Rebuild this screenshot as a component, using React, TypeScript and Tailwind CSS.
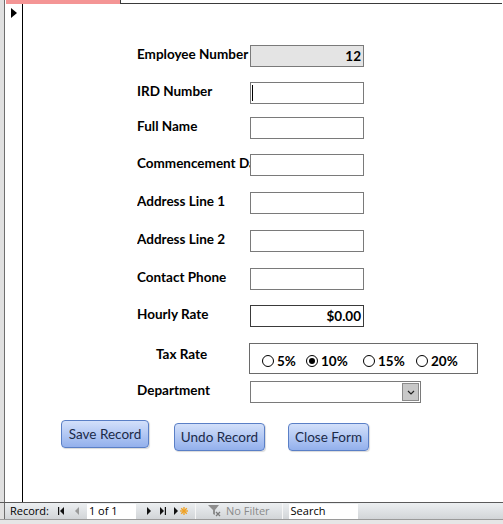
import React from "react";

const labelCls =
  "w-[113px] shrink-0 overflow-hidden whitespace-nowrap text-[13.5px] font-bold text-black leading-[16px] mb-[4px]";
const boxCls =
  "w-[114px] h-[22px] shrink-0 border border-[#7a7a7a] bg-white";

function Row({
  label,
  mt,
  children,
  gray,
}: {
  label: string;
  mt: string;
  children?: React.ReactNode;
  gray?: boolean;
}) {
  return (
    <div className={`flex items-center h-[22px] ${mt}`}>
      <div className={`${labelCls} ${gray ? "text-[#595959]" : ""}`}>{label}</div>
      {children ?? <div className={boxCls} />}
    </div>
  );
}

function Radio({ checked, label, w }: { checked?: boolean; label: string; w: string }) {
  return (
    <div className={`flex items-center ${w}`}>
      <div className="w-[12px] h-[12px] rounded-full border border-black bg-white flex items-center justify-center">
        {checked && <div className="w-[6px] h-[6px] rounded-full bg-black" />}
      </div>
      <span className="ml-[3px] text-[13.5px] font-bold leading-[16px]">{label}</span>
    </div>
  );
}

function Btn({ children, w, mt }: { children: React.ReactNode; w: string; mt: string }) {
  return (
    <div
      className={`${w} ${mt} h-[28px] rounded-[4px] border border-[#5a7fc6] bg-gradient-to-b from-[#d3e0fa] to-[#93b0ec] shadow-[1px_1px_1px_rgba(0,0,0,0.15)] flex items-center justify-center text-[13.5px] leading-[16px] text-[#1b2a48]`}
    >
      {children}
    </div>
  );
}

export default function App() {
  return (
    <div
      className="w-[503px] h-[524px] overflow-hidden bg-[#e6e6e6] flex flex-col"
      style={{ fontFamily: "Lato, 'Open Sans', sans-serif" }}
    >
      <div className="flex h-[502px]">
        <div className="w-[4px] bg-[#e0e0e0]" />
        <div className="w-[1px] bg-[#6e6e6e]" />
        <div className="flex-1 flex flex-col bg-white">
          {/* top header strip */}
          <div className="flex h-[4px]">
            <div className="w-[1px]" />
            <div className="w-[114px] bg-[#f49595]" />
            <div className="w-[1px] bg-[#3a3a3a]" />
            <div className="flex-1 border-b border-[#3a3a3a]" />
            <div className="w-[1px]" />
          </div>
          <div className="flex flex-1">
            {/* record selector */}
            <div className="w-[18px] border-r border-black flex justify-center pt-[4px] pl-[1px]">
              <svg width="6" height="10" viewBox="0 0 6 10">
                <path d="M0 0 L6 5 L0 10 Z" fill="#000" />
              </svg>
            </div>
            {/* form */}
            <div className="flex-1 flex flex-col pl-[114px]">
              <Row label="Employee Number" mt="mt-[41px]" gray>
                <div className="w-[114px] h-[22px] shrink-0 border border-[#7a7a7a] bg-[#e4e4e4] flex items-center justify-end pr-[2px] text-[13.5px] leading-[16px] font-bold">
                  12
                </div>
              </Row>
              <Row label="IRD Number" mt="mt-[15px]">
                <div className={`${boxCls} flex items-center pl-[1px]`}>
                  <div className="w-[1px] h-[16px] bg-black" />
                </div>
              </Row>
              <Row label="Full Name" mt="mt-[13px]" />
              <Row label="Commencement Date" mt="mt-[15px]" />
              <Row label="Address Line 1" mt="mt-[16px]" />
              <Row label="Address Line 2" mt="mt-[16px]" />
              <Row label="Contact Phone" mt="mt-[16px]" />
              <Row label="Hourly Rate" mt="mt-[15px]">
                <div className="w-[114px] h-[22px] shrink-0 border border-[#3a3a3a] bg-white flex items-center justify-end pr-[2px] text-[13.5px] leading-[16px] font-bold">
                  $0.00
                </div>
              </Row>
              {/* tax rate */}
              <div className="flex mt-[16px] h-[31px]">
                <div className="w-[112px] shrink-0 pl-[19px] pt-[3px] text-[13.5px] font-bold leading-[16px]">
                  Tax Rate
                </div>
                <div className="w-[229px] h-[31px] border border-[#6a6a6a] flex items-center pl-[12px] pt-[4px]">
                  <Radio label="5%" w="w-[44px]" />
                  <Radio checked label="10%" w="w-[57px]" />
                  <Radio label="15%" w="w-[53px]" />
                  <Radio label="20%" w="w-[50px]" />
                </div>
              </div>
              {/* department */}
              <div className="flex items-center h-[22px] mt-[7px]">
                <div className={`${labelCls} w-[112px]`}>Department</div>
                <div className="w-[171px] h-[22px] border border-[#7a7a7a] bg-white flex justify-end p-[1px]">
                  <div className="w-[17px] h-full bg-[#c8c8c8] border border-[#8a8a8a] flex items-center justify-center">
                    <svg width="8" height="5" viewBox="0 0 8 5">
                      <path d="M1 1 L4 4 L7 1" stroke="#222" strokeWidth="1.2" fill="none" />
                    </svg>
                  </div>
                </div>
              </div>
              {/* buttons */}
              <div className="flex items-start -ml-[76px] mt-[17px]">
                <Btn w="w-[88px]" mt="mt-0">Save Record</Btn>
                <div className="w-[25px]" />
                <Btn w="w-[91px]" mt="mt-[3px]">Undo Record</Btn>
                <div className="w-[23px]" />
                <Btn w="w-[81px]" mt="mt-[3px]">Close Form</Btn>
              </div>
            </div>
          </div>
        </div>
      </div>
      {/* navigation bar */}
      <div
        className="h-[18px] border-t border-[#5a5a5a] bg-gradient-to-b from-[#eceff1] to-[#d2d5d8] border-b border-b-[#9a9a9a] flex items-center text-[11px] text-black"
        style={{ fontFamily: "'Open Sans', 'Noto Sans', sans-serif" }}
      >
        <div className="w-[4px] h-full bg-[#e0e0e0]" />
        <div className="w-[1px] h-full bg-[#6e6e6e]" />
        <span className="ml-[5px] leading-[14px]">Record:</span>
        <svg className="ml-[9px]" width="6" height="8" viewBox="0 0 6 8">
          <rect x="0" y="0" width="1.2" height="8" fill="#111" />
          <path d="M6 0 L2 4 L6 8 Z" fill="#111" />
        </svg>
        <svg className="ml-[11px]" width="4" height="8" viewBox="0 0 4 8">
          <path d="M4 0 L0 4 L4 8 Z" fill="#9a9a9a" />
        </svg>
        <div className="ml-[8px] w-[49px] h-[15px] bg-white flex items-center pl-[2px] leading-[14px]">
          1 of 1
        </div>
        <svg className="ml-[11px]" width="4" height="8" viewBox="0 0 4 8">
          <path d="M0 0 L4 4 L0 8 Z" fill="#111" />
        </svg>
        <svg className="ml-[9px]" width="6" height="8" viewBox="0 0 6 8">
          <path d="M0 0 L4 4 L0 8 Z" fill="#111" />
          <rect x="4.8" y="0" width="1.2" height="8" fill="#111" />
        </svg>
        <svg className="ml-[8px]" width="16" height="10" viewBox="0 0 16 10">
          <path d="M0 1 L4 5 L0 9 Z" fill="#111" />
          <g stroke="#f0a020" strokeWidth="1.3">
            <path d="M10 1 L10 9" />
            <path d="M6 5 L14 5" />
            <path d="M7.2 2.2 L12.8 7.8" />
            <path d="M12.8 2.2 L7.2 7.8" />
          </g>
        </svg>
        <div className="ml-[5px] w-[1px] h-full bg-[#f6f6f6]" />
        <svg className="ml-[12px]" width="14" height="12" viewBox="0 0 14 12">
          <path d="M0 0 L11 0 L7 5 L7 10 L5 9 L5 5 Z" fill="#8e8e8e" />
          <path d="M8 7 L12 11 M12 7 L8 11" stroke="#7a7a7a" strokeWidth="1.3" />
        </svg>
        <span className="ml-[4px] text-[#8a8a8a] leading-[14px]">No Filter</span>
        <div className="ml-[12px] w-[1px] h-full bg-[#f6f6f6]" />
        <div className="ml-[6px] w-[69px] h-[15px] bg-white flex items-center pl-[2px] leading-[14px]">
          Search
        </div>
      </div>
      <div className="flex-1 bg-[#e6e6e6]" />
    </div>
  );
}
